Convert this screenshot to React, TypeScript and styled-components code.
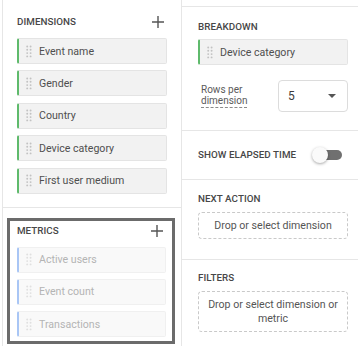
import styled, { createGlobalStyle } from 'styled-components';

const GlobalStyle = createGlobalStyle`
  html, body {
    margin: 0;
    padding: 0;
    background: #ffffff;
    font-family: Roboto, 'Liberation Sans', sans-serif;
  }
`;

const Layout = styled.div`
  display: flex;
  flex-direction: row;
  width: 358px;
  height: 346px;
  overflow: hidden;
`;

const LeftColumn = styled.div`
  margin-left: 2px;
  width: 178px;
  border-left: 1px solid #e6e6e6;
  border-right: 1px solid #e6e6e6;
  display: flex;
  flex-direction: column;
`;

const RightColumn = styled.div`
  flex: 1;
  display: flex;
  flex-direction: column;
  padding-top: 6px;
`;

const DimensionsSection = styled.div`
  padding: 14px 14px 13px 14px;
  border-bottom: 1px solid #e6e6e6;
`;

const MetricsBox = styled.div`
  box-sizing: border-box;
  margin: 10px 0 0 4px;
  width: 168px;
  height: 126px;
  border: 3px solid #6b6b6b;
  padding: 2px 6px 0 7px;
  overflow: hidden;
`;

const Header = styled.div`
  display: flex;
  align-items: center;
  justify-content: space-between;
  height: 16px;
`;

const Label = styled.div`
  font-size: 9.8px;
  line-height: 16px;
  font-weight: 500;
  color: #474747;
  letter-spacing: 0.05px;
  white-space: nowrap;
`;

const PlusButton = styled.span`
  display: flex;
  width: 12px;
  height: 12px;
  margin-right: 3px;
`;

const ChipList = styled.div<{ $top: number }>`
  display: flex;
  flex-direction: column;
  gap: 6.4px;
  margin-top: ${({ $top }) => $top}px;
`;

const Chip = styled.div<{ $variant: 'dimension' | 'metric' }>`
  display: flex;
  align-items: center;
  height: 26px;
  box-sizing: border-box;
  border: 1px solid ${({ $variant }) => ($variant === 'dimension' ? '#e4e4e4' : '#f0f0f0')};
  border-left: 2px solid ${({ $variant }) => ($variant === 'dimension' ? '#5fba6c' : '#a9c6f5')};
  border-radius: 2px;
  background: ${({ $variant }) => ($variant === 'dimension' ? '#f2f2f2' : '#f9f9f9')};
  padding-left: 7px;
  gap: 7px;
  font-size: 10.6px;
  color: ${({ $variant }) => ($variant === 'dimension' ? '#4f4f4f' : '#b4b4b4')};
  white-space: nowrap;
`;

const Section = styled.div<{ $padTop: number; $padBottom: number }>`
  border-top: 1px solid #e6e6e6;
  padding: ${({ $padTop }) => $padTop}px 10px ${({ $padBottom }) => $padBottom}px 16px;
`;

const RowsLine = styled.div`
  display: flex;
  align-items: center;
  margin-top: 15px;
`;

const RowsLabel = styled.div`
  width: 80px;
  padding-left: 3px;
  box-sizing: border-box;
  font-size: 10px;
  line-height: 11px;
  color: #5a5a5a;
  span {
    display: inline-block;
    border-bottom: 1px dashed #8a8a8a;
    padding-bottom: 1px;
  }
`;

const SelectBox = styled.div`
  flex: 1;
  height: 32px;
  box-sizing: border-box;
  border: 1px solid #dcdcdc;
  border-radius: 4px;
  display: flex;
  align-items: center;
  justify-content: space-between;
  padding: 0 11px 0 9px;
  font-size: 12px;
  color: #3c3c3c;
`;

const Caret = styled.span`
  width: 0;
  height: 0;
  border-left: 4px solid transparent;
  border-right: 4px solid transparent;
  border-top: 4px solid #555;
`;

const ToggleRow = styled.div`
  display: flex;
  align-items: center;
  height: 49px;
  padding-left: 16px;
  border-top: 1px solid #e6e6e6;
`;

const Toggle = styled.div`
  position: relative;
  width: 30px;
  height: 18px;
  margin-left: 16px;
`;

const Track = styled.div`
  position: absolute;
  left: 4px;
  top: 4px;
  width: 26px;
  height: 10px;
  border-radius: 5px;
  background: #707070;
`;

const Knob = styled.div`
  position: absolute;
  left: 0;
  top: 1px;
  width: 16px;
  height: 16px;
  border-radius: 50%;
  background: #fafafa;
  box-shadow: 0 1px 3px rgba(0, 0, 0, 0.35);
`;

const DropZone = styled.div<{ $height: number }>`
  margin-top: 5px;
  height: ${({ $height }) => $height}px;
  box-sizing: border-box;
  border: 1px dashed #c9c9c9;
  border-radius: 4px;
  display: flex;
  align-items: center;
  justify-content: center;
  text-align: center;
  padding: 0 7px;
  font-size: 10.6px;
  line-height: 14px;
  color: #555;
`;

const Plus = () => (
  <PlusButton>
    <svg width="12" height="12" viewBox="0 0 12 12">
      <path d="M6 0v12M0 6h12" stroke="#555" strokeWidth="1.4" fill="none" />
    </svg>
  </PlusButton>
);

const DragHandle = ({ faded }: { faded?: boolean }) => (
  <svg width="6" height="13" viewBox="0 0 6 13">
    {[1.5, 4.8, 8.1, 11.4].map((y) =>
      [1.2, 4.6].map((x) => (
        <circle key={`${x}-${y}`} cx={x} cy={y} r="0.95" fill={faded ? '#e0e0e0' : '#c2c2c2'} />
      ))
    )}
  </svg>
);

const dimensions = ['Event name', 'Gender', 'Country', 'Device category', 'First user medium'];
const metrics = ['Active users', 'Event count', 'Transactions'];

export default function App() {
  return (
    <>
      <GlobalStyle />
      <Layout>
        <LeftColumn>
          <DimensionsSection>
            <Header>
              <Label>DIMENSIONS</Label>
              <Plus />
            </Header>
            <ChipList $top={8}>
              {dimensions.map((d) => (
                <Chip key={d} $variant="dimension">
                  <DragHandle />
                  {d}
                </Chip>
              ))}
            </ChipList>
          </DimensionsSection>
          <MetricsBox>
            <Header>
              <Label>METRICS</Label>
              <Plus />
            </Header>
            <ChipList $top={8}>
              {metrics.map((m) => (
                <Chip key={m} $variant="metric">
                  <DragHandle faded />
                  {m}
                </Chip>
              ))}
            </ChipList>
          </MetricsBox>
        </LeftColumn>
        <RightColumn>
          <Section $padTop={12} $padBottom={18}>
            <Label>BREAKDOWN</Label>
            <ChipList $top={4}>
              <Chip $variant="dimension">
                <DragHandle />
                Device category
              </Chip>
            </ChipList>
            <RowsLine>
              <RowsLabel>
                <span>
                  Rows per
                  <br />
                  dimension
                </span>
              </RowsLabel>
              <SelectBox>
                5
                <Caret />
              </SelectBox>
            </RowsLine>
          </Section>
          <ToggleRow>
            <Label>SHOW ELAPSED TIME</Label>
            <Toggle>
              <Track />
              <Knob />
            </Toggle>
          </ToggleRow>
          <Section $padTop={11} $padBottom={20}>
            <Label>NEXT ACTION</Label>
            <DropZone $height={27}>Drop or select dimension</DropZone>
          </Section>
          <Section $padTop={10} $padBottom={14}>
            <Label>FILTERS</Label>
            <DropZone $height={41}>Drop or select dimension or metric</DropZone>
          </Section>
        </RightColumn>
      </Layout>
    </>
  );
}
